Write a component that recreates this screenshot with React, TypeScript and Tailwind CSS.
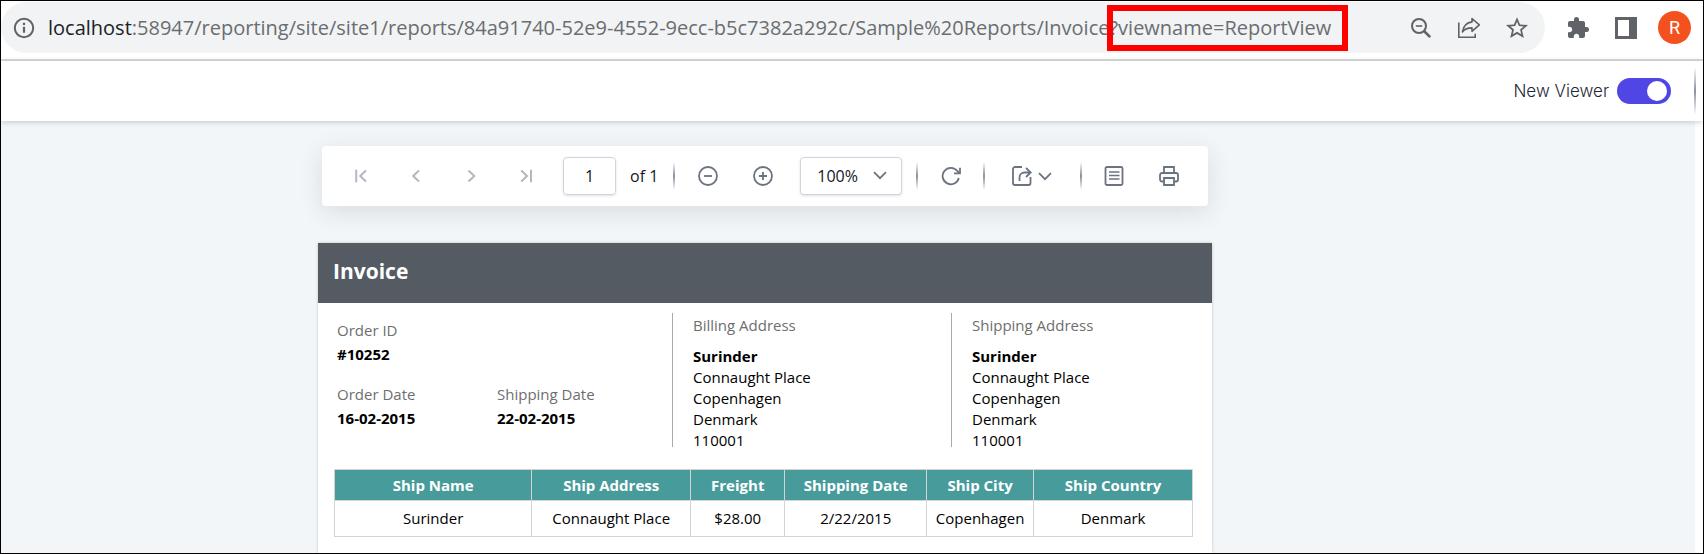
import React from "react";

const rows = [
  {
    name: "Surinder",
    address: "Connaught Place",
    freight: "$28.00",
    date: "2/22/2015",
    city: "Copenhagen",
    country: "Denmark",
  },
];

const addressLines = ["Connaught Place", "Copenhagen", "Denmark", "110001"];

function IconButton({
  label,
  className = "",
  children,
}: {
  label: string;
  className?: string;
  children: React.ReactNode;
}) {
  return (
    <button type="button" aria-label={label} className={`flex shrink-0 items-center justify-center ${className}`}>
      {children}
    </button>
  );
}

function Stroke({ d, size = 20, width = 2 }: { d: string; size?: number; width?: number }) {
  return (
    <svg width={size} height={size} viewBox="0 0 20 20" fill="none" stroke="currentColor" strokeWidth={width}>
      <path d={d} />
    </svg>
  );
}

function Separator() {
  return <div className="h-7 w-0.5 shrink-0 bg-linear-to-b from-transparent via-[#8a91a0] to-transparent" />;
}

function AddressBar() {
  return (
    <div className="flex h-[60px] items-start border-b-2 border-[#d9dadb] bg-white pt-px pr-3">
      <div className="flex h-[51px] min-w-0 flex-1 items-center rounded-full bg-[#f1f3f4] pl-[11px] pr-4 text-[#5f6368]">
        <IconButton label="View site information" className="size-6">
          <svg width="22" height="22" viewBox="0 0 22 22" fill="none" stroke="currentColor" strokeWidth="2">
            <circle cx="11" cy="11" r="9.2" />
            <path d="M11 9.8v6M11 5.8v2.2" strokeWidth="2.2" />
          </svg>
        </IconButton>
        <div className="ml-3 flex min-w-0 flex-1 items-center whitespace-nowrap font-['Open_Sans',sans-serif] text-[20px] leading-7 text-[#6b6d70]">
          <span className="text-[#202124]">localhost</span>
          <span>:58947/reporting/site/site1/reports/84a91740-52e9-4552-9ecc-b5c7382a292c/Sample%20Reports/Invoice</span>
          <span className="relative">
            ?viewname=ReportView
            <span className="absolute -top-[9px] -bottom-[9px] -left-[2px] -right-[17px] border-6 border-[#ff0000]" />
          </span>
        </div>
        <IconButton label="Zoom" className="size-6">
          <svg width="22" height="22" viewBox="0 0 22 22" fill="none" stroke="currentColor" strokeWidth="2">
            <circle cx="9" cy="9" r="7" />
            <path d="M5.8 9h6.4" strokeWidth="1.6" />
            <path d="M14 14l6.2 6.2" strokeWidth="2.6" />
          </svg>
        </IconButton>
        <IconButton label="Share this page" className="ml-6 size-6">
          <svg width="24" height="22" viewBox="0 0 24 22" fill="none" stroke="currentColor" strokeWidth="1.6">
            <path d="M1.8 5.5v14.7h16.4v-3.400" />
            <path d="M15 1.500l7.300 6.400-7.300 6.400v-3.400c-4.200 0-7.200.9-9.600 4 .9-5.400 3.800-9.200 9.600-10z" strokeLinejoin="round" />
          </svg>
        </IconButton>
        <IconButton label="Bookmark this tab" className="ml-6 size-6">
          <svg width="24" height="24" viewBox="0 0 24 24" fill="currentColor">
            <path d="M23 9.1l-7.9-.7L12 1.2 8.9 8.4l-7.9.7 6 5.2-1.8 7.7L12 17.9l6.8 4.1-1.8-7.7zM12 15.8l-4.1 2.5 1.1-4.7-3.6-3.1 4.8-.4L12 5.7l1.9 4.4 4.8.4-3.6 3.1 1.1 4.7z" />
          </svg>
        </IconButton>
      </div>
      <div className="flex h-[51px] items-center text-[#5f6368]">
        <IconButton label="Extensions" className="ml-[21px] size-6">
          <svg width="24" height="24" viewBox="0 0 24 24" fill="currentColor">
            <path d="M20.5 11H19V7c0-1.1-.9-2-2-2h-4V3.500a2.500 2.500 0 0 0-5 0V5H4c-1.100 0-1.990.9-1.990 2v3.800H3.500c1.490 0 2.700 1.210 2.700 2.700s-1.210 2.700-2.700 2.700H2V20c0 1.100.9 2 2 2h3.800v-1.500c0-1.490 1.210-2.700 2.700-2.700s2.700 1.210 2.700 2.700V22H17c1.100 0 2-.9 2-2v-4h1.500a2.500 2.500 0 0 0 0-5z" />
          </svg>
        </IconButton>
        <IconButton label="Side panel" className="ml-6 size-6">
          <svg width="22" height="22" viewBox="0 0 22 22" fill="currentColor">
            <path fillRule="evenodd" d="M0 0h22v22H0zM3 3v16h11V3z" />
          </svg>
        </IconButton>
        <button
          type="button"
          aria-label="Profile"
          className="ml-5 size-[33px] rounded-full bg-[#f4511e] font-['Roboto',sans-serif] text-[18px] leading-none text-white"
        >
          R
        </button>
      </div>
    </div>
  );
}

function ViewerHeader() {
  return (
    <header className="relative z-10 flex h-[60px] items-center justify-end bg-white pr-[7px] shadow-[0_1px_6px_rgba(0,0,0,0.2)]">
      <label htmlFor="new-viewer" className="mr-2 font-['Inter',sans-serif] text-[17px] font-light leading-6 text-[#1f2937]">
        New Viewer
      </label>
      <input
        id="new-viewer"
        type="checkbox"
        role="switch"
        defaultChecked
        className="mr-[23px] flex h-[26px] w-[54px] appearance-none items-center rounded-full bg-[#4f46e5] px-1 before:size-5 before:rounded-full before:bg-white checked:justify-end"
      />
      <div className="h-12 w-0.5 bg-linear-to-b from-transparent via-[#8a91a0] to-transparent" />
    </header>
  );
}

function Toolbar() {
  return (
    <div
      role="toolbar"
      className="flex h-[60px] items-center rounded bg-white pl-[11px] pr-2 font-['Open_Sans',sans-serif] text-[16px] text-[#111827] shadow-[0_6px_24px_rgba(31,41,55,0.12)]"
    >
      <div className="flex text-[#b4b7c2]">
        <IconButton label="First page" className="h-10 w-[55px]">
          <Stroke d="M5.200 3.800v12.400M15 4.500l-5.800 5.500 5.800 5.500" />
        </IconButton>
        <IconButton label="Previous page" className="h-10 w-[55px]">
          <Stroke d="M13 4.500L7.200 10l5.800 5.500" />
        </IconButton>
        <IconButton label="Next page" className="h-10 w-[55px]">
          <Stroke d="M7.500 4.500l5.800 5.500-5.800 5.500" />
        </IconButton>
        <IconButton label="Last page" className="h-10 w-[55px]">
          <Stroke d="M5.200 4.500l5.800 5.500-5.800 5.500M15 3.800v12.400" />
        </IconButton>
      </div>
      <input
        aria-label="Page number"
        defaultValue="1"
        className="ml-[10px] h-[38px] w-[53px] rounded border border-[#d1d5db] text-center shadow-sm"
      />
      <span className="ml-[14px] mr-[15px] whitespace-nowrap">of 1</span>
      <Separator />
      <div className="ml-[5px] flex text-[#6b7280]">
        <IconButton label="Zoom out" className="h-10 w-[55px]">
          <svg width="20" height="20" viewBox="0 0 20 20" fill="none" stroke="currentColor" strokeWidth="1.800">
            <circle cx="10" cy="10" r="9" />
            <path d="M6 10h8" />
          </svg>
        </IconButton>
        <IconButton label="Zoom in" className="h-10 w-[55px]">
          <svg width="20" height="20" viewBox="0 0 20 20" fill="none" stroke="currentColor" strokeWidth="1.800">
            <circle cx="10" cy="10" r="9" />
            <path d="M6 10h8M10 6v8" />
          </svg>
        </IconButton>
      </div>
      <div className="relative ml-[10px] mr-[14px]">
        <select
          aria-label="Zoom level"
          defaultValue="100%"
          className="h-[38px] w-[102px] appearance-none rounded border border-[#d1d5db] bg-white pl-4 shadow-sm"
        >
          <option>100%</option>
          <option>150%</option>
        </select>
        <svg
          className="pointer-events-none absolute right-[15px] top-[14px] text-[#6b7280]"
          width="14"
          height="9"
          viewBox="0 0 14 9"
          fill="none"
          stroke="currentColor"
          strokeWidth="1.700"
        >
          <path d="M1 1.200l6 6 6-6" />
        </svg>
      </div>
      <Separator />
      <IconButton label="Refresh" className="mx-[5px] h-10 w-[55px] text-[#6b7280]">
        <svg width="20" height="20" viewBox="0 0 20 20" fill="none" stroke="currentColor" strokeWidth="1.800">
          <path d="M17.800 12a8.200 8.200 0 1 1-1.500-7l2 2" />
          <path d="M19 1.800v5.500h-6" />
        </svg>
      </IconButton>
      <Separator />
      <IconButton label="Export" className="ml-[17px] mr-[18px] h-10 w-[60px] gap-[6px] text-[#6b7280]">
        <svg width="20" height="20" viewBox="0 0 20 20" fill="none" stroke="currentColor" strokeWidth="1.800">
          <path d="M10 1H3A2 2 0 0 0 1 3v14a2 2 0 0 0 2 2h13.500a2 2 0 0 0 2-2v-6" />
          <path d="M7.500 15v-3.500a5 5 0 0 1 5-5h6M14 2l4.800 4.500L14 11" />
        </svg>
        <svg width="14" height="9" viewBox="0 0 14 9" fill="none" stroke="currentColor" strokeWidth="1.700">
          <path d="M1 1.200l6 6 6-6" />
        </svg>
      </IconButton>
      <Separator />
      <div className="ml-1 flex text-[#6b7280]">
        <IconButton label="Print layout" className="h-10 w-[55px]">
          <svg width="20" height="20" viewBox="0 0 20 20" fill="none" stroke="currentColor" strokeWidth="1.800">
            <rect x="1.500" y="1" width="17" height="18" rx="1.500" />
            <path d="M5 6h10.500M5 9.500h10.500M5 13h10.500" strokeWidth="1.600" />
          </svg>
        </IconButton>
        <IconButton label="Print" className="h-10 w-[55px]">
          <svg width="20" height="20" viewBox="0 0 20 20" fill="none" stroke="currentColor" strokeWidth="1.800">
            <path d="M5 7V1h10v6" />
            <path d="M5 15.500H3A2 2 0 0 1 1 13.500V9a2 2 0 0 1 2-2h14a2 2 0 0 1 2 2v4.500a2 2 0 0 1-2 2h-2" />
            <path d="M5 12h10v7H5z" />
          </svg>
        </IconButton>
      </div>
    </div>
  );
}

function Field({ label, value }: { label: string; value: string }) {
  return (
    <div className="w-40">
      <dt className="text-[#6e6e6e]">{label}</dt>
      <dd className="mt-[3px] font-bold">{value}</dd>
    </div>
  );
}

function Address({ title, className }: { title: string; className: string }) {
  return (
    <section className={`h-[134px] border-l border-[#a9a9a9] pl-5 ${className}`}>
      <h2 className="mb-[10px] pt-[2px] text-[#6e6e6e]">{title}</h2>
      <p className="font-bold">Surinder</p>
      {addressLines.map((line) => (
        <p key={line}>{line}</p>
      ))}
    </section>
  );
}

function Report() {
  return (
    <article className="flex-1 bg-white font-['Open_Sans',sans-serif] text-[15px] leading-[21px] text-black shadow-[0_0_3px_rgba(0,0,0,0.2)]">
      <h1 className="flex h-[60px] items-center bg-[#545b63] px-[15px] pb-1 text-[21px] font-bold leading-7 text-white">
        Invoice
      </h1>
      <div className="flex pt-[10px]">
        <dl className="flex w-[354px] flex-wrap content-start gap-y-[19px] pl-[19px] pt-[7px]">
          <div className="w-full">
            <Field label="Order ID" value="#10252" />
          </div>
          <Field label="Order Date" value="16-02-2015" />
          <Field label="Shipping Date" value="22-02-2015" />
        </dl>
        <Address title="Billing Address" className="w-[279px]" />
        <Address title="Shipping Address" className="flex-1" />
      </div>
      <div className="pb-2 pl-4 pr-[19px] pt-[22px]">
        <table className="w-full table-fixed border-collapse text-center">
          <colgroup>
            <col className="w-[23%]" />
            <col className="w-[18.500%]" />
            <col className="w-[11%]" />
            <col className="w-[16.500%]" />
            <col className="w-[12.500%]" />
            <col className="w-[18.500%]" />
          </colgroup>
          <thead>
            <tr className="h-[31px] bg-[#479b9b] text-white">
              {["Ship Name", "Ship Address", "Freight", "Shipping Date", "Ship City", "Ship Country"].map((h) => (
                <th key={h} scope="col" className="border border-[#d3d3d3] font-bold">
                  {h}
                </th>
              ))}
            </tr>
          </thead>
          <tbody>
            {rows.map((row) => (
              <tr key={row.date} className="h-9">
                {Object.values(row).map((value) => (
                  <td key={value} className="border border-[#d3d3d3]">
                    {value}
                  </td>
                ))}
              </tr>
            ))}
          </tbody>
        </table>
      </div>
    </article>
  );
}

export default function App() {
  return (
    <div className="flex min-h-screen flex-col border border-black bg-white">
      <AddressBar />
      <ViewerHeader />
      <main className="mr-2 flex flex-1 flex-col items-center bg-[#f2f6f9] pr-[166px] pt-[25px]">
        <div className="flex w-full max-w-[894px] flex-1 flex-col">
          <div className="mx-1 mb-[37px]">
            <Toolbar />
          </div>
          <Report />
        </div>
      </main>
    </div>
  );
}
